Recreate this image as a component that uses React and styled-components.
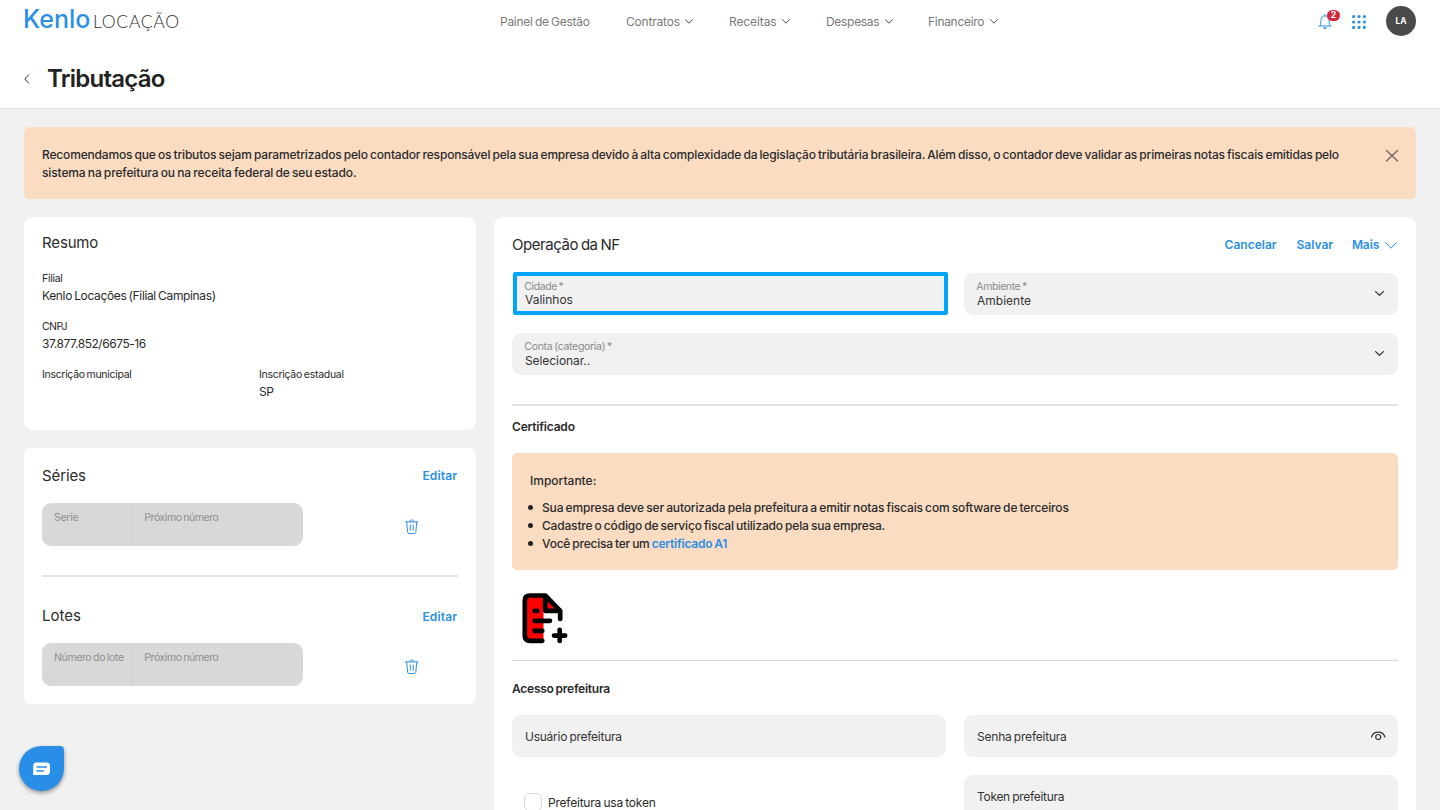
import React from "react";
import styled, { createGlobalStyle, css } from "styled-components";

const BLUE = "#2b8fe6";
const INK = "#2a2a2a";
const PEACH = "#fadcc3";
const GRAY = "#f1f1f1";

const GlobalStyle = createGlobalStyle`
  *, *::before, *::after { box-sizing: border-box; }
  html, body { margin: 0; padding: 0; }
  body {
    font-family: Inter, "Liberation Sans", sans-serif;
    font-size: 12px;
    line-height: 18px;
    word-spacing: -0.8px;
    color: ${INK};
    background: ${GRAY};
    overflow: hidden;
  }
  h1, h2, h3, p, ul { margin: 0; padding: 0; font-weight: inherit; }
  button { font: inherit; border: 0; background: none; padding: 0; cursor: pointer; }
`;

const Page = styled.div`
  height: 810px;
  overflow: hidden;
  display: flex;
  flex-direction: column;
`;

const Header = styled.header`
  flex: none;
  height: 109px;
  background: #fff;
  border-bottom: 1px solid #e2e2e2;
`;

const TopBar = styled.div`
  height: 43px;
  padding: 0 24px;
  display: grid;
  grid-template-columns: 476px 1fr auto;
  align-items: center;
`;

const Logo = styled.div`
  display: flex;
  align-items: baseline;
  gap: 3px;
  height: 30px;
  margin-top: -5px;
  line-height: 30px;
  white-space: nowrap;
`;

const LogoName = styled.span`
  width: 67px;
  margin-left: -1px;
  font-size: 25px;
  font-weight: 450;
  letter-spacing: ${(p) => p.$ls || 0}px;
  color: ${BLUE};
`;

const LogoProduct = styled.span`
  font-family: Lato, Inter, sans-serif;
  font-size: 17.5px;
  font-weight: 300;
  letter-spacing: ${(p) => p.$ls || 0}px;
  color: #333;
`;

const Nav = styled.nav`
  display: flex;
  gap: 36px;
`;

const NavItem = styled.a`
  display: flex;
  align-items: center;
  justify-content: space-between;
  width: ${(p) => p.$w}px;
  font-size: 12px;
  letter-spacing: ${(p) => p.$ls || 0}px;
  color: #7a7a7a;
  white-space: nowrap;
  &:last-child { margin-left: -1px; }
`;

const Tools = styled.div`
  display: flex;
  align-items: center;
`;

const Bell = styled.div`
  position: relative;
  width: 14px;
  height: 16px;
  margin-right: 20px;
  svg { display: block; }
`;

const Badge = styled.span`
  position: absolute;
  left: 9px;
  top: -4px;
  width: 13px;
  height: 11px;
  border-radius: 6px;
  background: #d4293b;
  color: #fff;
  font-size: 8.5px;
  font-weight: 700;
  line-height: 11px;
  text-align: center;
`;

const Avatar = styled.div`
  width: 30px;
  height: 30px;
  margin: -1px 0 1px 20px;
  border-radius: 50%;
  background: #4a4a4a;
  color: #fff;
  font-size: 8.5px;
  font-weight: 700;
  line-height: 30px;
  text-align: center;
`;

const TitleBar = styled.div`
  display: flex;
  align-items: center;
  gap: 17px;
  height: 36px;
  margin-top: 18px;
  padding-left: 24px;
`;

const Title = styled.h1`
  font-size: 24px;
  line-height: 36px;
  font-weight: 600;
  letter-spacing: ${(p) => p.$ls}px;
  color: #222;
`;

const Main = styled.main`
  padding: 18px 24px 0;
`;

const Notice = styled.section`
  display: flex;
  justify-content: space-between;
  align-items: flex-start;
  height: 72px;
  padding: 19px 18px 0;
  border-radius: 6px;
  background: ${PEACH};
  font-weight: 500;
`;

const Line = styled.span`
  display: block;
  white-space: nowrap;
  letter-spacing: ${(p) => p.$ls || 0}px;
`;

const Columns = styled.div`
  display: grid;
  grid-template-columns: 452px 922px;
  gap: 18px;
  margin-top: 18px;
  align-items: start;
`;

const Stack = styled.div`
  display: flex;
  flex-direction: column;
  gap: 18px;
`;

const Card = styled.section`
  height: ${(p) => p.$h}px;
  padding: ${(p) => p.$pt || 18}px 18px 18px;
  border-radius: ${(p) => p.$r || 9}px;
  background: #fff;
`;

const CardHead = styled.div`
  display: flex;
  align-items: center;
  justify-content: space-between;
  height: 20px;
`;

const CardTitle = styled.h2`
  font-size: 15px;
  line-height: 18px;
  font-weight: 400;
  letter-spacing: ${(p) => p.$ls || 0}px;
  white-space: nowrap;
`;

const LinkButton = styled.button`
  display: flex;
  align-items: center;
  gap: 6px;
  margin-top: ${(p) => p.$mt || 0}px;
  margin-left: ${(p) => p.$ml || 0}px;
  margin-right: ${(p) => p.$mr || 0}px;
  font-size: 12px;
  line-height: 18px;
  font-weight: 600;
  letter-spacing: ${(p) => p.$ls || 0}px;
  color: ${BLUE};
`;

const Actions = styled.div`
  display: flex;
  gap: 20px;
`;

const Info = styled.div`
  flex: none;
  width: ${(p) => p.$w || 217}px;
  height: 48px;
`;

const InfoRow = styled.div`
  display: flex;
  width: 434px;
`;

const InfoList = styled.div`
  margin-top: 18px;
`;

const InfoLabel = styled.div`
  font-size: 10.5px;
  line-height: 17px;
  letter-spacing: ${(p) => p.$ls || 0}px;
  white-space: nowrap;
`;

const InfoValue = styled(Line)`
  line-height: 18px;
`;

const SeriesRow = styled.div`
  display: flex;
  align-items: center;
  height: 43px;
  margin-top: 17px;
  svg { margin-top: 4px; }
`;

const DisabledGroup = styled.div`
  display: flex;
  width: 261px;
  height: 43px;
  margin-right: 102px;
  border-radius: 9px;
  background: #d8d8d8;
`;

const DisabledCell = styled.div`
  width: ${(p) => p.$w}px;
  padding: 6px 12px;
  font-size: 10.5px;
  letter-spacing: ${(p) => p.$ls || 0}px;
  color: #8e8e8e;
  white-space: nowrap;
  & + & { padding-left: 11.3px; border-left: 1px solid #cfcfcf; }
`;

const Rule = styled.hr`
  height: ${(p) => p.$h || 2}px;
  margin: ${(p) => p.$m};
  border: 0;
  background: ${(p) => p.$c || "#e3e3e3"};
`;

const Fields = styled.div`
  display: grid;
  grid-template-columns: 434px 434px;
  gap: 18px;
  margin-top: ${(p) => p.$mt}px;
`;

const Field = styled.div`
  position: relative;
  display: flex;
  align-items: center;
  justify-content: space-between;
  height: ${(p) => p.$h || 42}px;
  padding: 0 13px;
  border-radius: 9px;
  background: ${GRAY};
  ${(p) => p.$wide && css`grid-column: 1 / -1;`}
  ${(p) => p.$focused && css`
    width: 435px;
    height: 43px;
    margin-left: 1px;
    margin-top: -1px;
    padding: 0 8px;
    border: 4px solid #00a4fc;
    border-radius: 2px;
  `}
`;

const FieldText = styled.div`
  display: flex;
  flex-direction: column;
`;

const FieldLabel = styled.span`
  margin-left: -0.7px;
  font-size: 10.5px;
  line-height: 13px;
  letter-spacing: ${(p) => p.$ls || 0}px;
  color: #8b8b8b;
`;

const FieldValue = styled.span`
  font-size: 12px;
  line-height: ${(p) => p.$lh || 15}px;
  letter-spacing: ${(p) => p.$ls || 0}px;
  color: #333;
`;

const SelectArrow = styled.span`
  display: flex;
  margin-right: 1px;
  margin-bottom: 1px;
`;

const SectionTitle = styled.h3`
  font-size: 12px;
  line-height: 18px;
  font-weight: 600;
  letter-spacing: ${(p) => p.$ls || 0}px;
  margin-top: ${(p) => p.$mt || 0}px;
`;

const Important = styled.div`
  height: 117px;
  margin-top: 17px;
  padding: 19px 18px;
  border-radius: 5px;
  background: ${PEACH};
  font-weight: 500;
`;

const Bullets = styled.ul`
  margin-top: 9px;
  padding-left: 12px;
  list-style: none;
`;

const Bullet = styled.li`
  position: relative;
  white-space: nowrap;
  letter-spacing: ${(p) => p.$ls || 0}px;
  &::before {
    content: "";
    position: absolute;
    left: -14px;
    top: 6px;
    width: 5px;
    height: 5px;
    border-radius: 50%;
    background: #222;
  }
`;

const InlineLink = styled.a`
  color: ${BLUE};
  font-weight: 600;
`;

const Upload = styled.div`
  height: 52px;
  margin: 23px 0 0 9px;
  svg { display: block; }
`;

const Check = styled.label`
  display: flex;
  align-items: flex-start;
  gap: 6px;
  height: 19px;
  margin: 18px 0 0 12px;
  line-height: 20px;
  white-space: nowrap;
  letter-spacing: ${(p) => p.$ls || 0}px;
`;

const Box = styled.span`
  width: 18px;
  height: 18px;
  border: 1px solid #d9d9d9;
  border-radius: 5px;
  background: #fff;
`;

const Chat = styled.button`
  position: fixed;
  left: 19px;
  top: 746px;
  width: 45px;
  height: 45px;
  display: flex;
  align-items: center;
  justify-content: center;
  border-radius: 50% 4px 50% 50%;
  background: #298ee7;
  box-shadow: 0 2px 4px rgba(0, 0, 0, 0.4);
`;

const Chevron = ({ w = 8, h = 5, color = "#555", sw = 1 }) => (
  <svg width={w} height={h} viewBox={`0 0 ${w} ${h}`} fill="none" stroke={color} strokeWidth={sw} strokeLinecap="round" strokeLinejoin="round">
    <path d={`M.6 .6 L${w / 2} ${h - 0.8} L${w - 0.6} .6`} />
  </svg>
);

const Trash = () => (
  <svg width="14" height="16" viewBox="0 0 14 16" fill="none" stroke={BLUE} strokeWidth="1" strokeLinecap="round">
    <path d="M.6 2.900h12.300M4.600 2.700c0-2.500 4.300-2.500 4.300 0M1.700 3.200l1 10.100c.1.800.5 1.200 1.200 1.200h5.700c.7 0 1.100-.4 1.200-1.200l1-10.100M5.300 6v5.200M8.200 6v5.200" />
  </svg>
);

const menu = [
  { label: "Painel de Gestão", w: 90, ls: -0.27 },
  { label: "Contratos", w: 67, ls: -0.2, drop: true },
  { label: "Receitas", w: 61, ls: -0.1, drop: true },
  { label: "Despesas", w: 67, ls: -0.3, drop: true },
  { label: "Financeiro", w: 70, ls: -0.3, drop: true },
];

const Series = ({ title, titleLs, label, labelLs, linkMt }) => (
  <>
    <CardHead>
      <CardTitle $ls={titleLs}>{title}</CardTitle>
      <LinkButton $ls={0.18} $mr={0.7} $mt={linkMt}>Editar</LinkButton>
    </CardHead>
    <SeriesRow>
      <DisabledGroup>
        <DisabledCell $w={90} $ls={labelLs}>{label}</DisabledCell>
        <DisabledCell $w={171} $ls={-0.44}>Próximo número</DisabledCell>
      </DisabledGroup>
      <Trash />
    </SeriesRow>
  </>
);

const Dots = () => (
  <svg width="14" height="14" viewBox="0 0 14 14" fill={BLUE}>
    {[1.6, 7, 12.4].map((y) => [1.6, 7, 12.4].map((x) => <circle key={`${x}-${y}`} cx={x} cy={y} r="1.6" />))}
  </svg>
);

export default function App() {
  return (
    <Page>
      <GlobalStyle />
      <Header>
        <TopBar>
          <Logo>
            <LogoName $ls={0}>Kenlo</LogoName>
            <LogoProduct $ls={0.7}>LOCAÇÃO</LogoProduct>
          </Logo>
          <Nav>
            {menu.map((m) => (
              <NavItem key={m.label} $w={m.w} $ls={m.ls}>
                {m.label}
                {m.drop && <Chevron />}
              </NavItem>
            ))}
          </Nav>
          <Tools>
            <Bell>
              <svg width="14" height="16" viewBox="0 0 14 16" fill="none" stroke={BLUE} strokeLinecap="round" strokeLinejoin="round">
                <path d="M1 12h12M2 11.8C3 10.500 2.700 8 2.900 6.300C3.100 3.600 4.700 1.900 7 1.900S10.900 3.600 11.100 6.300C11.300 8 11 10.500 12 11.800M6.200 1h1.600" />
                <path d="M5 13.500h4c-.4 2-3.600 2-4 0z" fill={BLUE} stroke="none" />
              </svg>
              <Badge>2</Badge>
            </Bell>
            <Dots />
            <Avatar>LA</Avatar>
          </Tools>
        </TopBar>
        <TitleBar>
          <svg width="6" height="10" viewBox="0 0 6 10" fill="none" stroke="#333" strokeWidth="1" strokeLinecap="round" strokeLinejoin="round">
            <path d="M4.700 .8L.9 5l3.800 4.200" />
          </svg>
          <Title $ls={-0.75}>Tributação</Title>
        </TitleBar>
      </Header>

      <Main>
        <Notice>
          <p>
            <Line $ls={-0.173}>Recomendamos que os tributos sejam parametrizados pelo contador responsável pela sua empresa devido à alta complexidade da legislação tributária brasileira. Além disso, o contador deve validar as primeiras notas fiscais emitidas pelo</Line>
            <Line $ls={-0.13}>sistema na prefeitura ou na receita federal de seu estado.</Line>
          </p>
          <svg width="12" height="20" viewBox="0 0 12 20" fill="none" stroke="#6e6258" strokeWidth="1.200" strokeLinecap="round" overflow="visible">
            <path d="M.5 4.500l11 10.500M11.500 4.500L.5 15" />
          </svg>
        </Notice>

        <Columns>
          <Stack>
            <Card $h={213} $pt={17}>
              <CardTitle $ls={-0.15}>Resumo</CardTitle>
              <InfoList>
                <Info $w={416}>
                  <InfoLabel $ls={-0.27}>Filial</InfoLabel>
                  <InfoValue $ls={-0.36}>Kenlo Locações (Filial Campinas)</InfoValue>
                </Info>
                <Info $w={416}>
                  <InfoLabel $ls={-0.6}>CNPJ</InfoLabel>
                  <InfoValue $ls={-0.45}>37.877.852/6675-16</InfoValue>
                </Info>
                <InfoRow>
                  <Info><InfoLabel $ls={-0.31}>Inscrição municipal</InfoLabel></Info>
                  <Info>
                    <InfoLabel $ls={-0.28}>Inscrição estadual</InfoLabel>
                    <InfoValue $ls={-0.4}>SP</InfoValue>
                  </Info>
                </InfoRow>
              </InfoList>
            </Card>
            <Card $h={256} $r={6}>
              <Series title="Séries" titleLs={-0.12} label="Serie" labelLs={-0.25} />
              <Rule $m="29px 0 29px" />
              <Series title="Lotes" titleLs={0} label="Número do lote" labelLs={-0.37} linkMt={2} />
            </Card>
          </Stack>

          <Card $h={640}>
            <CardHead>
              <CardTitle $ls={-0.46}>Operação da NF</CardTitle>
              <Actions>
                <LinkButton>Cancelar</LinkButton>
                <LinkButton>Salvar</LinkButton>
                <LinkButton $ls={-0.1} $ml={-1.2} $mr={0.8}>Mais <Chevron w={12} h={7} color={BLUE} /></LinkButton>
              </Actions>
            </CardHead>
            <Fields $mt={18}>
              <Field $focused>
                <FieldText>
                  <FieldLabel $ls={-0.42}>Cidade *</FieldLabel>
                  <FieldValue $lh={14}>Valinhos</FieldValue>
                </FieldText>
              </Field>
              <Field>
                <FieldText>
                  <FieldLabel $ls={-0.4}>Ambiente *</FieldLabel>
                  <FieldValue>Ambiente</FieldValue>
                </FieldText>
                <SelectArrow><Chevron w={9} h={5} color="#333" sw={1.200} /></SelectArrow>
              </Field>
              <Field $wide>
                <FieldText>
                  <FieldLabel $ls={-0.3}>Conta (categoria) *</FieldLabel>
                  <FieldValue $ls={-0.08}>Selecionar..</FieldValue>
                </FieldText>
                <SelectArrow><Chevron w={9} h={5} color="#333" sw={1.200} /></SelectArrow>
              </Field>
            </Fields>
            <Rule $m="29px 0 0" />
            <SectionTitle $mt={12} $ls={-0.2}>Certificado</SectionTitle>
            <Important>
              <Line>Importante:</Line>
              <Bullets>
                <Bullet $ls={-0.15}>Sua empresa deve ser autorizada pela prefeitura a emitir notas fiscais com software de terceiros</Bullet>
                <Bullet $ls={-0.185}>Cadastre o código de serviço fiscal utilizado pela sua empresa.</Bullet>
                <Bullet $ls={-0.23}>Você precisa ter um <InlineLink>certificado A1</InlineLink></Bullet>
              </Bullets>
            </Important>
            <Upload>
              <svg width="48" height="52" viewBox="521 593 48 52" fill="none" stroke="#000" strokeWidth="4.700" strokeLinecap="round" strokeLinejoin="round">
                <path d="M526 597h18.500l12 14H543.500v28H526z" fill="#f00" stroke="none" />
                <path d="M542.300 640.800H530q-5.200 0-5.200-5V600.500q0-5 5.200-5H545.200L560.200 611v8M545.200 595.500v15.300H560.200M534.500 610.800h2.800M534.500 620.800h15.500M534.500 630.800h7.800M559.700 629.800v11.200M554 635.600h11.200" />
              </svg>
            </Upload>
            <Rule $m="15px 0 0" $h={1} $c="#d6d6d6" />
            <SectionTitle $mt={19} $ls={-0.25}>Acesso prefeitura</SectionTitle>
            <Fields $mt={17}>
              <Field><FieldValue $ls={-0.26}>Usuário prefeitura</FieldValue></Field>
              <Field>
                <FieldValue $ls={-0.22}>Senha prefeitura</FieldValue>
                <svg width="14" height="10" viewBox="0 0 14 10" fill="none" stroke="#333" strokeWidth="1.200" strokeLinecap="round" overflow="visible">
                  <path d="M.5 6C2.300 -.600 12.100 -.600 13.900 6" />
                  <circle cx="7.200" cy="6" r="2.500" />
                </svg>
              </Field>
              <Check $ls={-0.22}><Box />Prefeitura usa token</Check>
              <Field><FieldValue $ls={-0.3}>Token prefeitura</FieldValue></Field>
            </Fields>
          </Card>
        </Columns>
      </Main>

      <Chat aria-label="Chat">
        <svg width="18" height="14" viewBox="0 0 18 14">
          <path d="M3.500 .500h10q3.500 0 3.500 3.500v5.500q0 3.500-3.500 3.500H.2V4q0-3.500 3.300-3.500z" fill="#fff" />
          <path d="M4 5h9.500M4 9h6.500" stroke="#298ee7" strokeWidth="1.300" strokeLinecap="round" />
        </svg>
      </Chat>
    </Page>
  );
}
